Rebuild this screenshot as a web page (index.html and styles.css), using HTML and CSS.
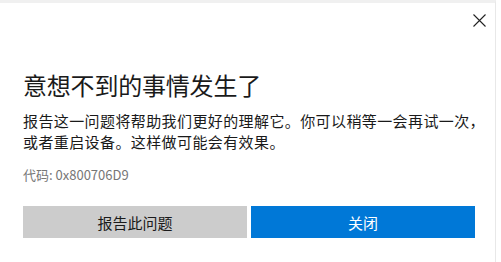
FILE: index.html
```html
<!DOCTYPE html>
<html lang="zh-CN">
<head>
    <meta charset="UTF-8">
    <title>意想不到的事情发生了</title>
    <link rel="stylesheet" href="styles.css">
</head>
<body>
    <div class="dialog">
        <div class="header">
            <button class="close" aria-label="关闭">
                <svg width="13" height="13" viewBox="0 0 13 13">
                    <path d="M0.5 0.5 L12.5 12.5 M12.5 0.5 L0.5 12.5" stroke="#222" stroke-width="1.1" fill="none"/>
                </svg>
            </button>
        </div>
        <div class="content">
            <h1>意想不到的事情发生了</h1>
            <p class="message">报告这一问题将帮助我们更好的理解它。你可以稍等一会再试一次，或者重启设备。这样做可能会有效果。</p>
            <p class="code">代码: 0x800706D9</p>
            <div class="actions">
                <button class="btn btn-secondary">报告此问题</button>
                <button class="btn btn-primary">关闭</button>
            </div>
        </div>
    </div>
</body>
</html>
```
FILE: styles.css
```css
:root {
    --accent: #0078d7;
    --gray-btn: #cccccc;
    --text: #1a1a1a;
    --muted: #767676;
}

html, body {
    margin: 0;
    padding: 0;
    background: #ffffff;
}

body {
    font-family: "Noto Sans CJK SC", "Noto Sans", sans-serif;
    color: var(--text);
}

.dialog {
    width: 495px;
    height: 259px;
    border-top: 3px solid #f0f0f0;
    border-right: 1px solid #e8e8e8;
    box-sizing: content-box;
}

.header {
    display: flex;
    justify-content: flex-end;
    padding: 5px 4px 0 0;
}

.close {
    width: 24px;
    height: 24px;
    border: none;
    background: transparent;
    padding: 0;
    display: flex;
    align-items: center;
    justify-content: center;
    cursor: pointer;
}

.content {
    padding: 0 4px 0 23px;
}

h1 {
    margin: 37px 0 0;
    font-size: 24px;
    line-height: 32px;
    font-weight: 400;
    letter-spacing: -0.2px;
}

.message {
    margin: 9px 0 0;
    font-size: 15px;
    line-height: 21px;
    letter-spacing: 0.4px;
}

.code {
    margin: 13px 0 0;
    font-size: 13px;
    line-height: 20px;
    color: var(--muted);
}

.actions {
    display: flex;
    gap: 4px;
    margin-top: 21px;
}

.btn {
    width: 224px;
    height: 32px;
    border: none;
    font-family: inherit;
    font-size: 15px;
    cursor: pointer;
    padding: 0;
}

.btn-secondary {
    background: var(--gray-btn);
    color: var(--text);
}

.btn-primary {
    background: var(--accent);
    color: #ffffff;
}
```
